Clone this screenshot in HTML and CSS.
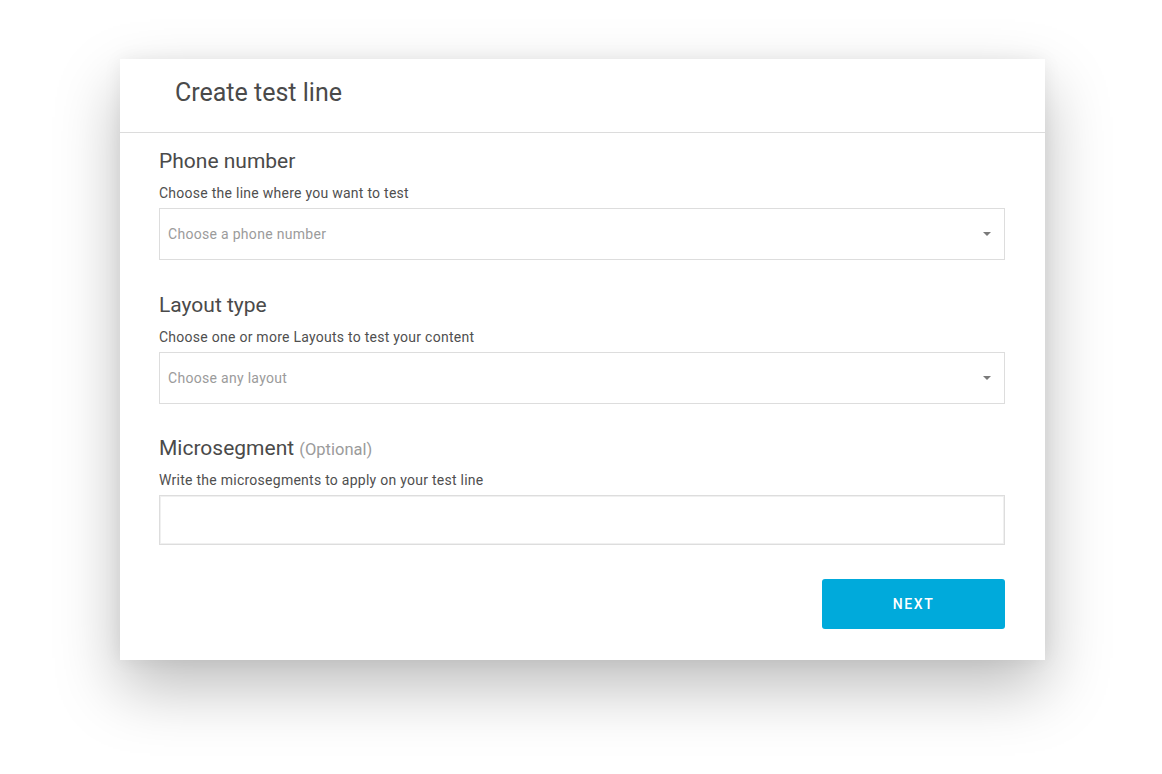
FILE: index.html
```html
<!DOCTYPE html>
<html lang="en">
<head>
<meta charset="utf-8">
<title>Create test line</title>
<link rel="stylesheet" href="styles.css">
</head>
<body>
<div class="dialog">
  <div class="dialog-header">
    <h1 class="dialog-title">Create test line</h1>
  </div>
  <div class="dialog-body">
    <section class="field">
      <h2 class="field-title">Phone number</h2>
      <p class="field-help">Choose the line where you want to test</p>
      <div class="select">
        <span class="placeholder">Choose a phone number</span>
        <span class="caret"></span>
      </div>
    </section>
    <section class="field field-tight">
      <h2 class="field-title">Layout type</h2>
      <p class="field-help">Choose one or more Layouts to test your content</p>
      <div class="select">
        <span class="placeholder">Choose any layout</span>
        <span class="caret"></span>
      </div>
    </section>
    <section class="field field-last">
      <h2 class="field-title">Microsegment <span class="optional">(Optional)</span></h2>
      <p class="field-help">Write the microsegments to apply on your test line</p>
      <div class="textbox"></div>
    </section>
    <div class="actions">
      <button class="btn-next">NEXT</button>
    </div>
  </div>
</div>
</body>
</html>
```

FILE: styles.css
```css
html, body {
  margin: 0;
  padding: 0;
  background: #ffffff;
}

body {
  font-family: Roboto, "Liberation Sans", Arial, sans-serif;
  width: 1162px;
  height: 774px;
  overflow: hidden;
}

.dialog {
  margin: 59px 0 0 120px;
  width: 925px;
  background: #ffffff;
  box-shadow: 0 28px 60px rgba(0, 0, 0, 0.26), 0 0 18px rgba(0, 0, 0, 0.06);
}

.dialog-header {
  height: 73px;
  border-bottom: 1px solid #dcdcdc;
  padding-left: 55px;
  display: flex;
  align-items: center;
}

.dialog-title {
  margin: -6px 0 0 0;
  font-size: 25px;
  font-weight: 400;
  color: #4a4a4a;
  line-height: 30px;
}

.dialog-body {
  padding: 16px 40px 31px 39px;
}

.field {
  margin-bottom: 33px;
}

.field-tight {
  margin-bottom: 32px;
}

.field-last {
  margin-bottom: 34px;
}

.field-title {
  margin: 0 0 10px 0;
  font-size: 21px;
  font-weight: 400;
  line-height: 24px;
  color: #4a4a4a;
}

.optional {
  font-size: 16.5px;
  line-height: 1;
  color: #9b9b9b;
}

.field-help {
  margin: 0 0 5px 0;
  font-size: 14px;
  line-height: 20px;
  letter-spacing: 0.26px;
  color: #4f4f4f;
}

.select {
  height: 52px;
  box-sizing: border-box;
  border: 1px solid #dddddd;
  display: flex;
  align-items: center;
  justify-content: space-between;
  padding: 0 13px 0 8px;
}

.placeholder {
  font-size: 14px;
  letter-spacing: 0.3px;
  color: #9b9b9b;
}

.caret {
  width: 0;
  height: 0;
  border-left: 4.5px solid transparent;
  border-right: 4.5px solid transparent;
  border-top: 4px solid #7a7a7a;
}

.textbox {
  height: 50px;
  box-sizing: border-box;
  border: 1px solid #dddddd;
  box-shadow: inset 0 0 0 1px #f0f0f0;
}

.actions {
  display: flex;
  justify-content: flex-end;
}

.btn-next {
  width: 183px;
  height: 50px;
  border: none;
  border-radius: 3px;
  background: #00aadb;
  color: #ffffff;
  font-family: Roboto, "Liberation Sans", Arial, sans-serif;
  font-size: 14px;
  font-weight: 500;
  letter-spacing: 1.6px;
  cursor: pointer;
}
```
